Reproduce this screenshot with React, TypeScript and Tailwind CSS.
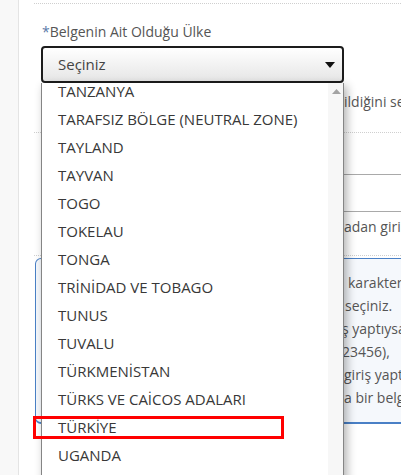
import React from "react";

const countries = [
  "TANZANYA",
  "TARAFSIZ BÖLGE (NEUTRAL ZONE)",
  "TAYLAND",
  "TAYVAN",
  "TOGO",
  "TOKELAU",
  "TONGA",
  "TRİNİDAD VE TOBAGO",
  "TUNUS",
  "TUVALU",
  "TÜRKMENİSTAN",
  "TÜRKS VE CAİCOS ADALARI",
  "TÜRKİYE",
  "UGANDA",
  "UKRAYNA",
];

// one line of text where the start sits behind the open list
function Line({ hidden, shown, w = "w-[294px]" }: { hidden: string; shown: string; w?: string }) {
  return (
    <div className="flex whitespace-nowrap">
      <span className={`${w} shrink-0 overflow-hidden`}>{hidden}</span>
      <span>{shown}</span>
    </div>
  );
}

export default function App() {
  return (
    <div
      className="relative w-[401px] h-[475px] overflow-hidden bg-white flex"
      style={{ fontFamily: '"Open Sans", "Noto Sans", sans-serif' }}
    >
      {/* Left rail */}
      <div className="w-[19px] shrink-0 bg-[#f8f8f8] border-r border-[#e4e4e4]" />

      {/* Form */}
      <div className="w-[600px] shrink-0 pl-[15px]">
        <div className="mt-[3px] border-t border-dotted border-[#cfcfcf]" />

        <div className="pl-[7px]">
          <label className="mt-[18px] block pl-[1px] text-[14px] leading-[20px] text-[#555]">
            <span className="text-[#5a79a8]">*</span>Belgenin Ait Olduğu Ülke
          </label>
          <div className="mt-[4px] w-[303px] h-[37px] rounded-[4px] border-2 border-[#1c1c1c] bg-gradient-to-b from-white to-[#e6e6e6] flex items-center justify-between pl-[15px] pr-[7px]">
            <span className="text-[15px] text-[#444]">Seçiniz</span>
            <svg width="10" height="6" viewBox="0 0 10 6">
              <path d="M0 0h10L5 6z" fill="#111" />
            </svg>
          </div>
          <div className="mt-[9px] text-[14px] leading-[20px] text-[#555]">
            <Line hidden="Belgenin hangi ülke tarafından ver" shown="ildiğini seçiniz." w="w-[303px]" />
          </div>
        </div>

        <div className="mt-[20px] border-t border-dotted border-[#cfcfcf]" />

        <div className="pl-[7px]">
          <label className="mt-[12px] block pl-[1px] text-[14px] leading-[20px] text-[#555]">
            <span className="text-[#5a79a8]">*</span>Belge Numarası
          </label>
          <div className="mt-[9px] w-[520px] h-[38px] border border-[#a9a9a9] bg-white" />
          <div className="mt-[5px] text-[14px] leading-[20px] text-[#555]">
            <Line hidden="Belge numarasını boşluk bırakm" shown="adan girin." w="w-[303px]" />
          </div>
        </div>

        <div className="mt-[18px] border-t border-dotted border-[#cfcfcf]" />

        {/* Info box */}
        <div className="mt-[2px] ml-[1px] w-[520px] rounded-[6px] border border-b-2 border-[#4a80c6] bg-[#f5f8fc] pl-[14px] pt-[12px] pb-[13px] text-[14px] leading-[23px] text-[#555]">
          <Line hidden="Belge numarası en fazla 20" shown="karakter olmalıdır." w="w-[298px]" />
          <Line hidden="Belgenin ait olduğu ülkeyi doğru" shown="seçiniz." w="w-[295px]" />
          <Line hidden="Türk vatandaşı kimlik kartı ile giri" shown="ş yaptıysanız" w="w-[292px]" />
          <Line hidden="kartın seri numarasını (örn: A01B1" shown="23456)," w="w-[292px]" />
          <Line hidden="yabancı pasaportu ile ülkeye giriş ya da " shown="giriş yaptıysanız" />
          <Line hidden="pasaport numaranızı veya başka bir belge ya da" shown="a bir belge" />
        </div>
      </div>

      {/* Open option list */}
      <div className="absolute left-[41px] top-[83px] w-[303px] h-[400px] overflow-hidden bg-white border-x border-[#858585] shadow-[3px_3px_9px_rgba(0,0,0,0.3)]">
        <div className="absolute right-0 top-0 bottom-0 w-[15px] bg-[#f7f7f7]">
          <svg className="absolute left-[4px] top-[6px]" width="9" height="5" viewBox="0 0 9 5">
            <path d="M0 5L4.5 0L9 5z" fill="#a3a3a3" />
          </svg>
        </div>
        <ul className="-mt-[6px]">
          {countries.map((c) => (
            <li
              key={c}
              className="h-[28px] flex items-center pl-[16px] text-[15px] text-[#383838] whitespace-nowrap"
            >
              {c}
            </li>
          ))}
        </ul>
      </div>

      {/* Highlight marker */}
      <div className="absolute left-[33px] top-[416px] w-[251px] h-[23px] border-[3px] border-[#ff0000]" />
    </div>
  );
}
